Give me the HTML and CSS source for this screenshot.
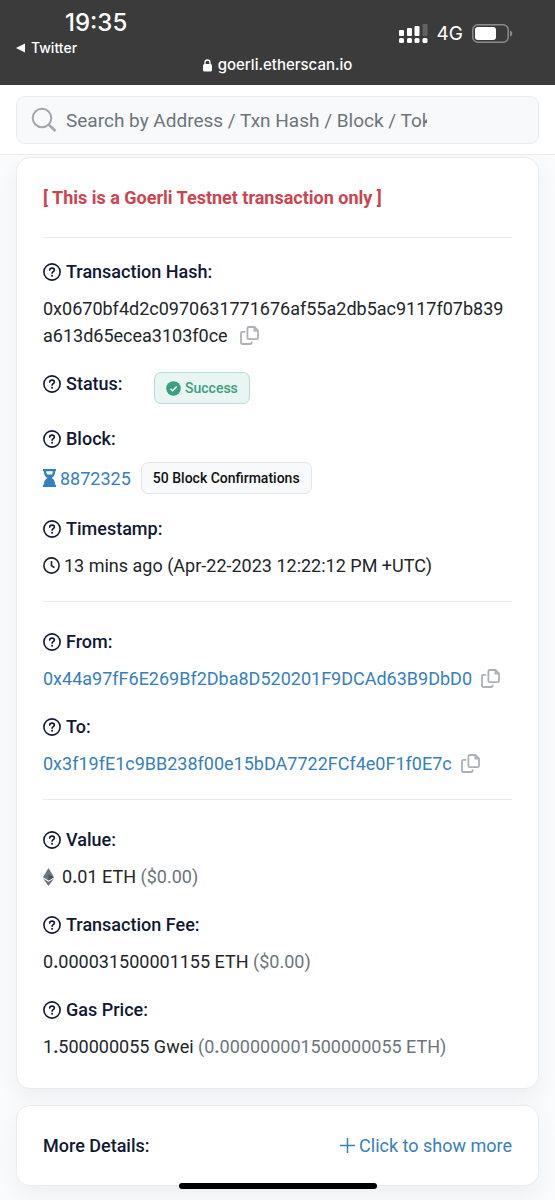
FILE: index.html
```html
<!DOCTYPE html>
<html lang="en">
<head>
<meta charset="utf-8">
<meta name="viewport" content="width=device-width, initial-scale=1">
<title>Goerli Transaction Details</title>
<link rel="stylesheet" href="styles.css">
</head>
<body>
<svg class="sprite" aria-hidden="true">
  <symbol id="help" viewBox="0 0 18 18"><circle cx="9" cy="9" r="8.1" fill="none" stroke="currentColor" stroke-width="1.6"/><path d="M6.7 7.1c0-1.3.9-2 2.3-2 1.5 0 2.4.8 2.4 1.9 0 1.6-2.3 1.7-2.3 3.300" fill="none" stroke="currentColor" stroke-width="1.6" stroke-linecap="round"/><circle cx="9.1" cy="12.7" r="1.05" fill="currentColor"/></symbol>
  <symbol id="copy" viewBox="0 0 19 19"><path d="M8.8 1h5.7L18 4.5v7.3a1.4 1.4 0 0 1-1.4 1.4H8.8a1.4 1.4 0 0 1-1.4-1.4V2.4A1.4 1.4 0 0 1 8.8 1ZM5.200 5.800H2.400A1.400 1.400 0 0 0 1 7.200v9.400A1.400 1.400 0 0 0 2.400 18h7.800a1.400 1.400 0 0 0 1.400-1.400v-1" fill="none" stroke="currentColor" stroke-width="1.8"/><path d="M13.500 1v4.500H18Z" fill="currentColor"/></symbol>
</svg>
<header class="phone-bar">
  <div class="phone-status">
    <div class="phone-left">
      <time class="clock">19:35</time>
      <a class="back" href="#"><svg width="9" height="10" viewBox="0 0 9 10"><path d="M0 5 9 .5v9Z" fill="currentColor"/></svg>Twitter</a>
    </div>
    <div class="phone-right">
      <svg width="29" height="20" viewBox="0 0 29 20" fill="currentColor"><rect x="0" y="6" width="5" height="6" rx="1"/><rect x="8" y="4" width="5" height="8" rx="1"/><rect x="15.500" y="2" width="5" height="10" rx="1"/><rect x="23.500" y="0" width="5" height="12" rx="1" opacity=".2"/><rect x="0" y="14" width="5" height="5" rx="1.500"/><rect x="8" y="14" width="5" height="5" rx="1.500"/><rect x="15.500" y="14" width="5" height="5" rx="1.500"/><rect x="23.500" y="14" width="5" height="5" rx="1.500"/></svg>
      <span class="network">4G</span>
      <svg width="41" height="19" viewBox="0 0 41 19"><rect x=".800" y=".800" width="35.400" height="17.400" rx="5" fill="none" stroke="#8b8b8b" stroke-width="1.500"/><rect x="3" y="3" width="21" height="13" rx="3" fill="#fff"/><path d="M38 6.500c3 1 3 5 0 6Z" fill="#8b8b8b"/></svg>
    </div>
  </div>
  <div class="url"><svg width="9" height="13" viewBox="0 0 9 13"><rect y="5" width="9" height="7.500" rx="1.500" fill="currentColor"/><path d="M2 6V3.500a2.500 2.500 0 0 1 5 0V6" fill="none" stroke="currentColor" stroke-width="1.300"/></svg>goerli.etherscan.io</div>
</header>
<form class="search-bar">
  <label class="search">
    <svg width="26" height="26" viewBox="0 0 26 26" fill="none" stroke="currentColor"><circle cx="11" cy="11" r="9.300" stroke-width="2"/><path d="m17.800 17.800 6.700 6.200" stroke-width="2.600"/></svg>
    <input type="text" aria-label="Search" placeholder="Search by Address / Txn Hash / Block / Token">
  </label>
</form>
<main class="page">
  <section class="card">
    <p class="notice">[ This is a Goerli Testnet transaction only ]</p>
    <dl class="group group-first">
      <div class="field">
        <dt><svg class="help"><use href="#help"/></svg>Transaction Hash:</dt>
        <dd class="hash">0x0670bf4d2c0970631771676af55a2db5ac9117f07b839a613d65ecea3103f0ce<button type="button" class="copy" aria-label="Copy hash"><svg><use href="#copy"/></svg></button></dd>
      </div>
      <div class="field field-inline">
        <dt><svg class="help"><use href="#help"/></svg>Status:</dt>
        <dd><span class="badge badge-success"><svg width="15" height="15" viewBox="0 0 15 15"><circle cx="7.500" cy="7.500" r="7.300" fill="currentColor"/><path d="m4.500 7.700 2.100 2.100 4-4.200" fill="none" stroke="#fff" stroke-width="1.500"/></svg>Success</span></dd>
      </div>
      <div class="field">
        <dt><svg class="help"><use href="#help"/></svg>Block:</dt>
        <dd class="row block-row"><a href="#" class="row"><svg width="13" height="18" viewBox="0 0 13 18"><path d="M0 0h13v2.200h-1v1.300c0 2.300-1.400 4.200-3.300 5.500 1.900 1.300 3.300 3.200 3.300 5.500v1.300h1V18H0v-2.200h1v-1.300C1 12.200 2.400 10.300 4.300 9 2.400 7.700 1 5.800 1 3.500V2.200H0Z" fill="currentColor"/><path d="M3.200 2.200h6.600c0 1.500-.4 2.500-1 3.300H4.200c-.6-.8-1-1.800-1-3.300Z" fill="#fff"/></svg>8872325</a><span class="badge">50 Block Confirmations</span></dd>
      </div>
      <div class="field">
        <dt><svg class="help"><use href="#help"/></svg>Timestamp:</dt>
        <dd class="row"><svg width="17" height="17" viewBox="0 0 17 17" fill="none" stroke="currentColor" stroke-width="1.600"><circle cx="8.500" cy="8.500" r="7.600"/><path d="M8.500 4v4.700l3 2"/></svg>13 mins ago (Apr-22-2023 12:22:12 PM +UTC)</dd>
      </div>
    </dl>
    <dl class="group">
      <div class="field">
        <dt><svg class="help"><use href="#help"/></svg>From:</dt>
        <dd><a href="#">0x44a97fF6E269Bf2Dba8D520201F9DCAd63B9DbD0</a><button type="button" class="copy copy-near" aria-label="Copy sender"><svg><use href="#copy"/></svg></button></dd>
      </div>
      <div class="field">
        <dt><svg class="help"><use href="#help"/></svg>To:</dt>
        <dd><a href="#">0x3f19fE1c9BB238f00e15bDA7722FCf4e0F1f0E7c</a><button type="button" class="copy copy-near" aria-label="Copy recipient"><svg><use href="#copy"/></svg></button></dd>
      </div>
    </dl>
    <dl class="group">
      <div class="field">
        <dt><svg class="help"><use href="#help"/></svg>Value:</dt>
        <dd class="row value-row"><svg width="11" height="18" viewBox="0 0 11 18"><path d="M5.500 0 11 9.200l-5.500 3.200L0 9.200Z" fill="#6c757d"/><path d="M5.500 6.700 11 9.200l-5.500 3.200Z" fill="#4b5258"/><path d="m0 10.500 5.500 3.200 5.500-3.200L5.500 18Z" fill="#6c757d"/></svg><span>0<b>.</b>01 ETH <span class="muted">($0.00)</span></span></dd>
      </div>
      <div class="field">
        <dt><svg class="help"><use href="#help"/></svg>Transaction Fee:</dt>
        <dd>0<b>.</b>000031500001155 ETH <span class="muted">($0.00)</span></dd>
      </div>
      <div class="field">
        <dt><svg class="help"><use href="#help"/></svg>Gas Price:</dt>
        <dd>1<b>.</b>500000055 Gwei <span class="muted">(0<b>.</b>000000001500000055 ETH)</span></dd>
      </div>
    </dl>
  </section>
  <section class="card card-more">
    <h2>More Details:</h2>
    <a href="#" class="row"><svg width="15" height="15" viewBox="0 0 15 15"><path d="M7.500 0v15M0 7.500h15" stroke="currentColor" stroke-width="1.500"/></svg>Click to show more</a>
  </section>
</main>
<div class="home-indicator"></div>
</body>
</html>
```
FILE: styles.css
```css
* { box-sizing: border-box; }
body {
  margin: 0;
  background: #fafbfc;
  color: #212529;
  font: 18px/27px Roboto, "Liberation Sans", sans-serif;
}
svg { flex: none; }
p, dl, dd, h2 { margin: 0; }
a { color: #3580bd; text-decoration: none; }
.sprite { display: none; }

.phone-bar {
  padding: 11px 0;
  background: #3b3b3b;
  color: #fff;
  font-family: Inter, "Liberation Sans", sans-serif;
}
.phone-status {
  display: flex;
  justify-content: space-between;
  align-items: center;
  padding: 0 42px 0 16px;
}
.phone-left { display: flex; flex-direction: column; gap: 5px; }
.clock { padding-left: 49px; font-size: 24px; font-weight: 500; line-height: 24px; }
.back {
  display: flex;
  align-items: center;
  gap: 6px;
  color: inherit;
  font-size: 14px;
  font-weight: 500;
  line-height: 16px;
}
.phone-right { display: flex; align-items: center; gap: 9px; }
.network { font-size: 19px; line-height: 24px; }
.url {
  display: flex;
  justify-content: center;
  align-items: center;
  gap: 6px;
  font-size: 15px;
  font-weight: 500;
  line-height: 18px;
}

.search-bar {
  padding: 11px 16px 10px;
  background: #fff;
  border-bottom: 1px solid #e9ecef;
}
.search {
  display: flex;
  align-items: center;
  gap: 9px;
  height: 48px;
  padding: 0 111px 0 14px;
  border: 1px solid #e9ecef;
  border-radius: 9px;
  background: #f8f9fa;
  color: #a3a8ae;
}
.search input {
  flex: 1;
  min-width: 0;
  padding: 0;
  border: 0;
  outline: 0;
  background: none;
  color: #212529;
  font: inherit;
  font-size: 19px;
}
.search input::placeholder { color: #6c757d; opacity: 1; }

.page {
  display: flex;
  flex-direction: column;
  gap: 16px;
  padding: 2px 16px 14px;
}
.card {
  padding: 26px 26px 28px;
  border: 1px solid #e9ecef;
  border-radius: 14px;
  background: #fff;
  box-shadow: 0 9px 20px rgba(189, 197, 209, .2);
}
.notice {
  padding-bottom: 26px;
  color: #cb4450;
  font-weight: 700;
}
.group {
  display: flex;
  flex-direction: column;
  gap: 21px;
  padding-top: 26px;
  border-top: 1px solid #e9ecef;
}
.group-first { padding-top: 20px; }
.group + .group { margin-top: 22px; }
.field { display: flex; flex-direction: column; gap: 10px; }
.field-inline {
  display: grid;
  grid-template-columns: 101px 1fr;
  align-items: start;
}
.field-inline dd { display: flex; padding-top: 2px; }
dt, h2 {
  display: flex;
  align-items: center;
  color: #111834;
  font-size: 18px;
  font-weight: 500;
}
dt { gap: 5px; }
.help { width: 18px; height: 18px; }
.hash { word-break: break-all; }
.row { display: flex; align-items: center; gap: 4px; }
.block-row { gap: 10px; }
.value-row { gap: 8px; }
.muted { color: #6c757d; }
.copy {
  margin-left: 12px;
  padding: 0;
  border: 0;
  background: none;
  color: #adb0b7;
  line-height: 0;
  vertical-align: -3px;
}
.copy-near { margin-left: 9px; }
.copy svg { width: 19px; height: 19px; }
.badge {
  display: inline-flex;
  align-items: center;
  gap: 4px;
  height: 32px;
  padding: 0 11px;
  border: 1px solid #e4e6e9;
  border-radius: 7px;
  background: #f8f9fa;
  color: #111;
  font-size: 14px;
  font-weight: 500;
}
.badge-success {
  border-color: #b5dfd3;
  background: #e8f5f2;
  color: #3c9f83;
}
.card-more {
  display: flex;
  justify-content: space-between;
  padding-bottom: 26px;
}
.home-indicator {
  position: fixed;
  bottom: 11px;
  left: 50%;
  width: 198px;
  height: 6px;
  border-radius: 3px;
  background: #000;
  transform: translateX(-50%);
}
```
